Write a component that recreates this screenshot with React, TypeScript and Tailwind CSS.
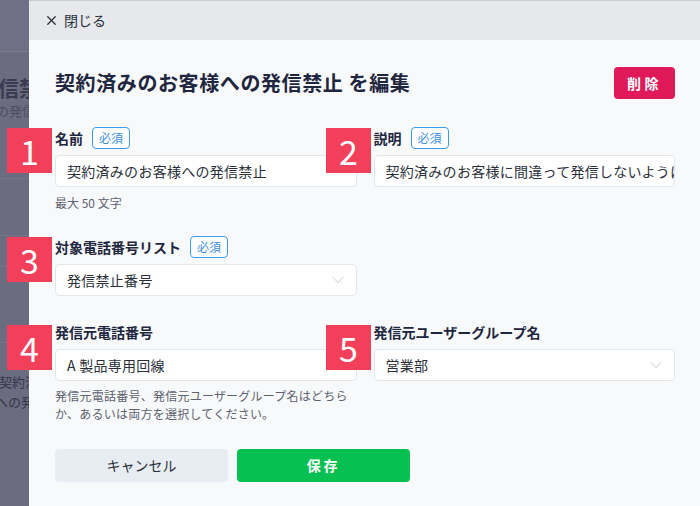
import { X, ChevronDown } from 'lucide-react';

const FONT = "font-['Noto_Sans_CJK_JP','Noto_Sans',sans-serif]";

const Required = () => (
  <span className="flex h-[22px] items-center rounded-[4px] border border-[#3d9bf0] bg-white px-[6px] text-[12px] text-[#3d8fe8]">
    必須
  </span>
);

const Label = ({ text, required }: { text: string; required?: boolean }) => (
  <div className="flex h-[22px] items-center gap-[9px]">
    <span className="text-[14px] font-bold text-[#1e2640]">{text}</span>
    {required && <Required />}
  </div>
);

const Input = ({ value }: { value: string }) => (
  <div className="mt-[6px] flex h-[32px] items-center overflow-hidden whitespace-nowrap rounded-[4px] border border-[#e3e6eb] bg-white px-[11px] text-[14px] tracking-[0.02em] text-[#2b2f3a]">
    {value}
  </div>
);

const Select = ({ value }: { value: string }) => (
  <div className="mt-[6px] flex h-[32px] items-center justify-between rounded-[4px] border border-[#e3e6eb] bg-white pl-[11px] pr-[8px] text-[14px] tracking-[0.02em] text-[#2b2f3a]">
    <span>{value}</span>
    <ChevronDown className="h-[20px] w-[20px] text-[#b9bec7]" strokeWidth={1} />
  </div>
);

const Marker = ({ n, className }: { n: number; className: string }) => (
  <div
    className={`absolute flex h-[45px] w-[45px] items-center justify-center bg-[#f2405a] text-[34px] leading-none text-white ${className}`}
  >
    {n}
  </div>
);

export default function App() {
  return (
    <div className={`relative flex h-[506px] w-[700px] overflow-hidden ${FONT}`}>
      {/* dimmed page behind the drawer */}
      <div className="flex w-[29px] shrink-0 flex-col overflow-hidden bg-[#6b6c80]">
        <div className="h-[52px] border-b border-[#7b7c90] bg-[#6f7085]" />
        <div className="ml-[-2px] mt-[22px] whitespace-nowrap text-[21px] font-bold leading-[26px] text-[#3a3b52]">
          信禁止
        </div>
        <div className="ml-[-4px] mt-[4px] h-[14px] whitespace-nowrap text-[13px] leading-[14px] text-[#4b4c63]">
          の発信
        </div>
        <div className="mt-[60px] border-b border-[#75768b]" />
        <div className="mt-[56px] border-b border-[#75768b]" />
        <div className="mt-[30px] border-b border-[#75768b]" />
        <div className="mt-[58px] h-[18px] border-b border-[#75768b]" />
        <div className="mt-[29px] ml-[-1px] whitespace-nowrap text-[13px] leading-[20px] text-[#34354c]">
          契約済み
        </div>
        <div className="ml-[-5px] whitespace-nowrap text-[13px] leading-[20px] text-[#34354c]">への発信</div>
      </div>

      {/* drawer */}
      <div className="flex flex-1 flex-col bg-[#f8f9fb]">
        <div className="flex h-[40px] shrink-0 items-center gap-[5px] border-t border-[#c9ccd2] bg-[#e6e8ec] pl-[15px] text-[14px] text-[#2b2f3a]">
          <X className="h-[15px] w-[15px]" strokeWidth={2} />
          <span>閉じる</span>
        </div>

        <div className="flex flex-col pl-[26px] pr-[25px]">
          <div className="mt-[27px] flex h-[32px] items-center justify-between">
            <h1 className="text-[20px] font-bold tracking-[0.03em] text-[#1e2640]">
              契約済みのお客様への発信禁止 を編集
            </h1>
            <button className="flex h-[32px] w-[61px] items-center justify-center rounded-[4px] bg-[#e01a5a] text-[14px] font-bold tracking-[0.25em] text-white">
              削除
            </button>
          </div>

          <div className="mt-[28px] grid grid-cols-2 gap-x-[17px] gap-y-[25px]">
            <div>
              <Label text="名前" required />
              <Input value="契約済みのお客様への発信禁止" />
              <div className="mt-[8px] text-[12px] leading-[16px] text-[#5d6270]">最大 50 文字</div>
            </div>
            <div>
              <Label text="説明" required />
              <Input value="契約済みのお客様に間違って発信しないようにするためのリスト" />
            </div>

            <div>
              <Label text="対象電話番号リスト" required />
              <Select value="発信禁止番号" />
            </div>
            <div />

            <div>
              <Label text="発信元電話番号" />
              <Input value="A 製品専用回線" />
              <div className="mt-[6px] text-[12px] leading-[18px] tracking-[0.02em] text-[#5d6270]">
                発信元電話番号、発信元ユーザーグループ名はどちらか、あるいは両方を選択してください。
              </div>
            </div>
            <div>
              <Label text="発信元ユーザーグループ名" />
              <Select value="営業部" />
            </div>
          </div>

          <div className="mt-[26px] flex gap-[9px]">
            <button className="flex h-[33px] w-[173px] items-center justify-center rounded-[4px] bg-[#e8edf3] text-[14px] text-[#2b2f3a]">
              キャンセル
            </button>
            <button className="flex h-[33px] w-[173px] items-center justify-center rounded-[4px] bg-[#06c152] text-[14px] font-bold tracking-[0.2em] text-white">
              保存
            </button>
          </div>
        </div>
      </div>

      <Marker n={1} className="left-[7px] top-[128px]" />
      <Marker n={2} className="left-[326px] top-[128px]" />
      <Marker n={3} className="left-[7px] top-[237px]" />
      <Marker n={4} className="left-[7px] top-[325px]" />
      <Marker n={5} className="left-[326px] top-[325px]" />
    </div>
  );
}
